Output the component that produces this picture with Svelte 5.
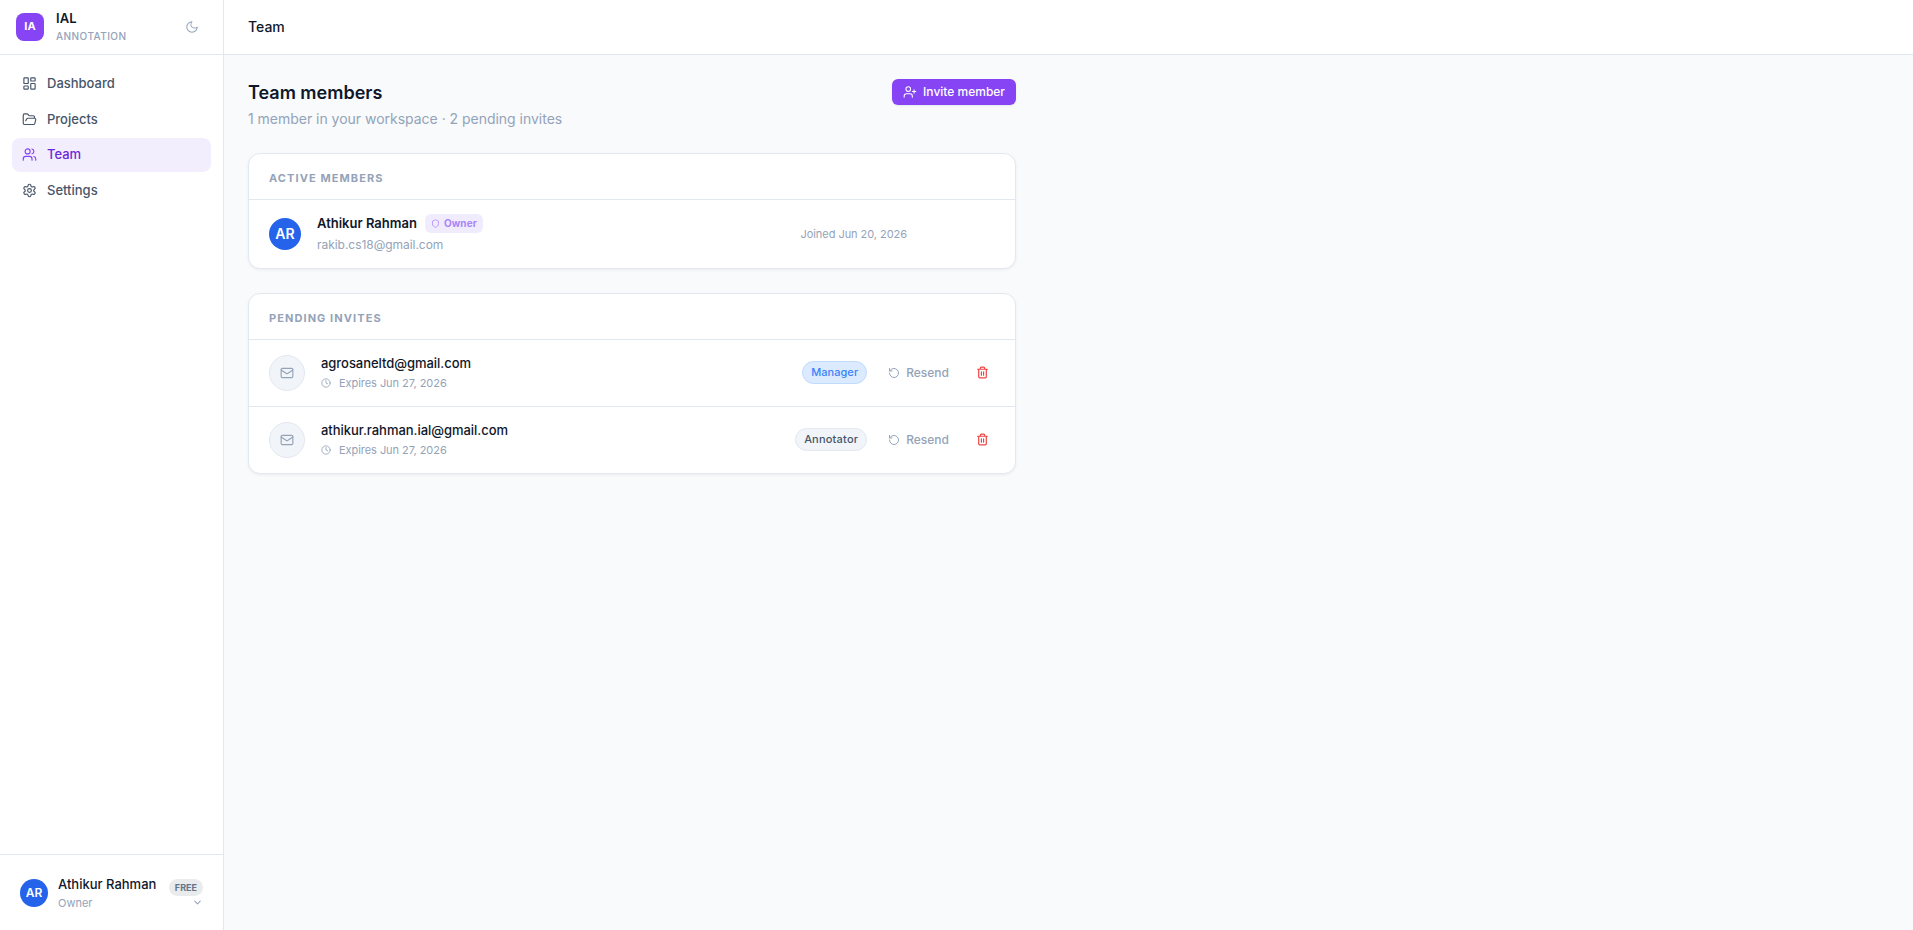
<script>
  const nav = [
    { label: 'Dashboard', icon: 'dashboard' },
    { label: 'Projects', icon: 'folder' },
    { label: 'Team', icon: 'users', active: true },
    { label: 'Settings', icon: 'settings' }
  ];
  const invites = [
    { email: 'agrosaneltd@gmail.com', role: 'Manager', expires: 'Jun 27, 2026' },
    { email: 'athikur.rahman.ial@gmail.com', role: 'Annotator', expires: 'Jun 27, 2026' }
  ];
  const icons = {
    dashboard: '<rect width="7" height="9" x="3" y="3" rx="1"/><rect width="7" height="5" x="14" y="3" rx="1"/><rect width="7" height="9" x="14" y="12" rx="1"/><rect width="7" height="5" x="3" y="16" rx="1"/>',
    folder: '<path d="m6 14 1.5-2.9A2 2 0 0 1 9.24 10H20a2 2 0 0 1 1.94 2.5l-1.54 6a2 2 0 0 1-1.95 1.5H4a2 2 0 0 1-2-2V5a2 2 0 0 1 2-2h3.9a2 2 0 0 1 1.69.9l.81 1.2a2 2 0 0 0 1.67.9H18a2 2 0 0 1 2 2v2"/>',
    users: '<path d="M16 21v-2a4 4 0 0 0-4-4H6a4 4 0 0 0-4 4v2"/><circle cx="9" cy="7" r="4"/><path d="M22 21v-2a4 4 0 0 0-3-3.87M16 3.13a4 4 0 0 1 0 7.75"/>',
    settings: '<path d="M12.22 2h-.44a2 2 0 0 0-2 2v.18a2 2 0 0 1-1 1.73l-.43.25a2 2 0 0 1-2 0l-.15-.08a2 2 0 0 0-2.73.73l-.22.38a2 2 0 0 0 .73 2.73l.15.1a2 2 0 0 1 1 1.72v.51a2 2 0 0 1-1 1.74l-.15.09a2 2 0 0 0-.73 2.73l.22.38a2 2 0 0 0 2.73.73l.15-.08a2 2 0 0 1 2 0l.43.25a2 2 0 0 1 1 1.73V20a2 2 0 0 0 2 2h.44a2 2 0 0 0 2-2v-.18a2 2 0 0 1 1-1.73l.43-.25a2 2 0 0 1 2 0l.15.08a2 2 0 0 0 2.73-.73l.22-.39a2 2 0 0 0-.73-2.73l-.15-.08a2 2 0 0 1-1-1.74v-.5a2 2 0 0 1 1-1.74l.15-.09a2 2 0 0 0 .73-2.73l-.22-.38a2 2 0 0 0-2.73-.73l-.15.08a2 2 0 0 1-2 0l-.43-.25a2 2 0 0 1-1-1.73V4a2 2 0 0 0-2-2z"/><circle cx="12" cy="12" r="3"/>',
    moon: '<path d="M12 3a6 6 0 0 0 9 9 9 9 0 1 1-9-9Z"/>',
    userPlus: '<path d="M16 21v-2a4 4 0 0 0-4-4H6a4 4 0 0 0-4 4v2"/><circle cx="9" cy="7" r="4"/><path d="M19 8v6M22 11h-6"/>',
    shield: '<path d="M20 13c0 5-3.5 7.5-7.66 8.95a1 1 0 0 1-.67-.01C7.5 20.5 4 18 4 13V6a1 1 0 0 1 1-1c2 0 4.5-1.2 6.24-2.72a1.17 1.17 0 0 1 1.52 0C14.51 3.81 17 5 19 5a1 1 0 0 1 1 1z"/>',
    mail: '<rect width="20" height="16" x="2" y="4" rx="2"/><path d="m22 7-8.97 5.7a1.94 1.94 0 0 1-2.06 0L2 7"/>',
    clock: '<circle cx="12" cy="12" r="10"/><path d="M12 6v6l4 2"/>',
    resend: '<path d="M3 12a9 9 0 1 0 9-9 9.75 9.75 0 0 0-6.74 2.74L3 8"/><path d="M3 3v5h5"/>',
    trash: '<path d="M3 6h18M19 6v14a2 2 0 0 1-2 2H7a2 2 0 0 1-2-2V6M8 6V4a2 2 0 0 1 2-2h4a2 2 0 0 1 2 2v2M10 11v6M14 11v6"/>',
    chevron: '<path d="m6 9 6 6 6-6"/>'
  };
</script>

{#snippet icon(name, size, stroke = 2)}
  <svg width={size} height={size} viewBox="0 0 24 24" fill="none" stroke="currentColor" stroke-width={stroke} stroke-linecap="round" stroke-linejoin="round" aria-hidden="true">{@html icons[name]}</svg>
{/snippet}

<div class="app">
  <aside>
    <div class="brand">
      <div class="logo">IA</div>
      <div class="brand-text">
        <div class="brand-name">IAL</div>
        <div class="brand-sub">ANNOTATION</div>
      </div>
      <button class="theme" aria-label="Theme">{@render icon('moon', 14, 1.75)}</button>
    </div>
    <nav>
      {#each nav as item}
        <a href="#top" class:active={item.active}>{@render icon(item.icon, 15, 1.85)}<span>{item.label}</span></a>
      {/each}
    </nav>
    <div class="account">
      <div class="avatar small">AR</div>
      <div class="account-text">
        <div class="account-name">Athikur Rahman</div>
        <div class="account-role">Owner</div>
      </div>
      <div class="account-side">
        <span class="plan">FREE</span>
        <span class="chev">{@render icon('chevron', 11, 2.25)}</span>
      </div>
    </div>
  </aside>

  <div class="content">
    <header>Team</header>
    <main>
      <div class="heading">
        <div>
          <h1>Team members</h1>
          <p>1 member in your workspace · 2 pending invites</p>
        </div>
        <button class="invite">{@render icon('userPlus', 14, 1.75)}<span>Invite member</span></button>
      </div>

      <section>
        <h2>ACTIVE MEMBERS</h2>
        <div class="row member">
          <div class="avatar">AR</div>
          <div class="info">
            <div class="name-line">
              <span class="name">Athikur Rahman</span>
              <span class="owner">{@render icon('shield', 9)}Owner</span>
            </div>
            <div class="email">rakib.cs18@gmail.com</div>
          </div>
          <div class="joined">Joined Jun 20, 2026</div>
        </div>
      </section>

      <section>
        <h2>PENDING INVITES</h2>
        {#each invites as inv}
          <div class="row pending">
            <div class="mail">{@render icon('mail', 14)}</div>
            <div class="info">
              <div class="invitee">{inv.email}</div>
              <div class="expires">{@render icon('clock', 10)}<span>Expires {inv.expires}</span></div>
            </div>
            <span class="role" class:manager={inv.role === 'Manager'}>{inv.role}</span>
            <button class="resend">{@render icon('resend', 12)}<span>Resend</span></button>
            <button class="trash" aria-label="Remove">{@render icon('trash', 13, 2.2)}</button>
          </div>
        {/each}
      </section>
    </main>
  </div>
</div>

<style>
  :global(body) { margin: 0; }
  .app {
    display: flex;
    height: 100vh;
    overflow: hidden;
    background: #f8fafc;
    color: #0f172a;
    font-family: Inter, sans-serif;
    font-size: 13px;
    line-height: 1.5;
  }
  .app :global(svg) { display: block; flex: none; }
  button { border: 0; padding: 0; background: none; font: inherit; color: inherit; }
  aside {
    box-sizing: border-box;
    width: 224px;
    flex: none;
    display: flex;
    flex-direction: column;
    background: #fff;
    border-right: 1px solid #e2e8f0;
  }
  .brand {
    box-sizing: border-box;
    height: 55px;
    display: flex;
    align-items: center;
    gap: 12px;
    padding: 0 24px 0 16px;
    border-bottom: 1px solid #e2e8f0;
  }
  .logo {
    width: 28px;
    height: 28px;
    line-height: 27px;
    border-radius: 8px;
    background: #8644f4;
    color: #fff;
    font-size: 11px;
    font-weight: 700;
    text-align: center;
  }
  .brand-text { flex: 1; }
  .brand-name { font-weight: 600; line-height: 17px; letter-spacing: 0.1px; }
  .brand-sub { margin-top: 1px; font-size: 10px; font-weight: 500; line-height: 17px; letter-spacing: 0.45px; color: #94a3b8; }
  .theme { color: #94a3b8; }
  nav { flex: 1; display: flex; flex-direction: column; gap: 2px; padding: 12px; }
  nav a {
    display: flex;
    align-items: center;
    gap: 10px;
    padding: 7px 10px;
    border-radius: 8px;
    color: #475569;
    font-weight: 500;
    text-decoration: none;
  }
  nav a.active { background: #f3eefe; color: #6d28d9; }
  nav a.active :global(svg) { color: #8644f4; }
  .account {
    box-sizing: border-box;
    height: 76px;
    display: flex;
    align-items: center;
    padding: 0 20px;
    border-top: 1px solid #e2e8f0;
  }
  .avatar {
    width: 32px;
    height: 32px;
    line-height: 32px;
    flex: none;
    border-radius: 50%;
    background: #2563eb;
    color: #fff;
    font-size: 14px;
    font-weight: 600;
    text-align: center;
  }
  .avatar.small { width: 28px; height: 28px; line-height: 28px; font-size: 12px; }
  .account-text { flex: 1; margin-left: 10px; white-space: nowrap; }
  .account-name { font-weight: 500; line-height: 18px; }
  .account-role { margin: 1px 0 -1px; font-size: 11px; line-height: 18px; color: #94a3b8; }
  .account-side { display: flex; flex-direction: column; align-items: flex-end; gap: 1px; padding-top: 1px; }
  .plan {
    padding: 0 6px;
    border-radius: 9px;
    background: #e9ebed;
    color: #64748b;
    font-size: 9px;
    font-weight: 700;
    line-height: 17px;
  }
  .chev { color: #94a3b8; }
  .content { flex: 1; min-width: 0; display: flex; flex-direction: column; }
  header {
    box-sizing: border-box;
    height: 55px;
    padding: 0 24px;
    line-height: 54px;
    background: #fff;
    border-bottom: 1px solid #e2e8f0;
    font-size: 14px;
    font-weight: 500;
  }
  main { box-sizing: border-box; width: 816px; padding: 24px; }
  .heading { display: flex; align-items: flex-start; justify-content: space-between; height: 74px; }
  h1 { margin: 0; font-size: 18px; font-weight: 600; line-height: 27px; }
  p { margin: 2px 0 0; font-size: 14px; line-height: 21px; letter-spacing: -0.02px; color: #94a3b8; }
  .invite {
    box-sizing: border-box;
    height: 26px;
    display: flex;
    align-items: center;
    gap: 6px;
    padding: 0 11px;
    border-radius: 6px;
    background: #8644f4;
    box-shadow: 0 1px 2px rgba(15, 23, 42, 0.08);
    color: #fff;
    font-size: 12px;
    font-weight: 500;
  }
  section {
    margin-bottom: 24px;
    overflow: hidden;
    background: #fff;
    border: 1px solid #e2e8f0;
    border-radius: 12px;
    box-shadow: 0 1px 3px rgba(15, 23, 42, 0.06);
  }
  h2 {
    margin: 0;
    padding: 0 20px;
    color: #94a3b8;
    font-size: 11px;
    font-weight: 700;
    letter-spacing: 1.08px;
    line-height: 49px;
    height: 45px;
  }
  .row { display: flex; align-items: center; padding: 0 20px; border-top: 1px solid #e2e8f0; }
  .member { height: 68px; }
  .pending { height: 66px; }
  .info { flex: 1; margin-left: 16px; }
  .name-line { display: flex; align-items: flex-start; gap: 8px; height: 20px; }
  .name { font-weight: 600; }
  .owner {
    display: flex;
    align-items: center;
    gap: 4px;
    padding: 0 6px;
    border-radius: 6px;
    background: #f1ebfe;
    color: #a985f8;
    font-size: 10px;
    font-weight: 700;
    line-height: 19px;
    letter-spacing: 0.12px;
  }
  .email { margin-top: 2px; font-size: 12px; line-height: 18px; letter-spacing: -0.04px; color: #94a3b8; }
  .joined { margin-right: 88px; font-size: 11px; letter-spacing: -0.05px; color: #94a3b8; }
  .mail {
    box-sizing: border-box;
    width: 36px;
    height: 36px;
    display: grid;
    place-items: center;
    border: 1px solid #e2e8f0;
    border-radius: 50%;
    background: #f1f5f9;
    color: #94a3b8;
  }
  .invitee { font-weight: 500; letter-spacing: -0.04px; }
  .expires { display: flex; align-items: center; gap: 8px; margin: 1px 0; font-size: 11px; line-height: 16.5px; letter-spacing: -0.05px; color: #94a3b8; }
  .role {
    margin-bottom: 1px;
    padding: 0 8px;
    border: 1px solid #e2e8f0;
    border-radius: 12px;
    background: #f1f5f9;
    color: #475569;
    font-size: 11px;
    font-weight: 500;
    line-height: 21px;
    letter-spacing: 0.2px;
  }
  .role.manager { border-color: #bfdbfe; background: #dbeafe; color: #3b82f6; letter-spacing: 0.05px; }
  .resend { display: flex; align-items: center; gap: 6px; margin-left: 21px; color: #94a3b8; font-size: 12px; font-weight: 500; }
  .trash { margin: 0 6px 1px 27px; color: #ef4444; }
</style>
